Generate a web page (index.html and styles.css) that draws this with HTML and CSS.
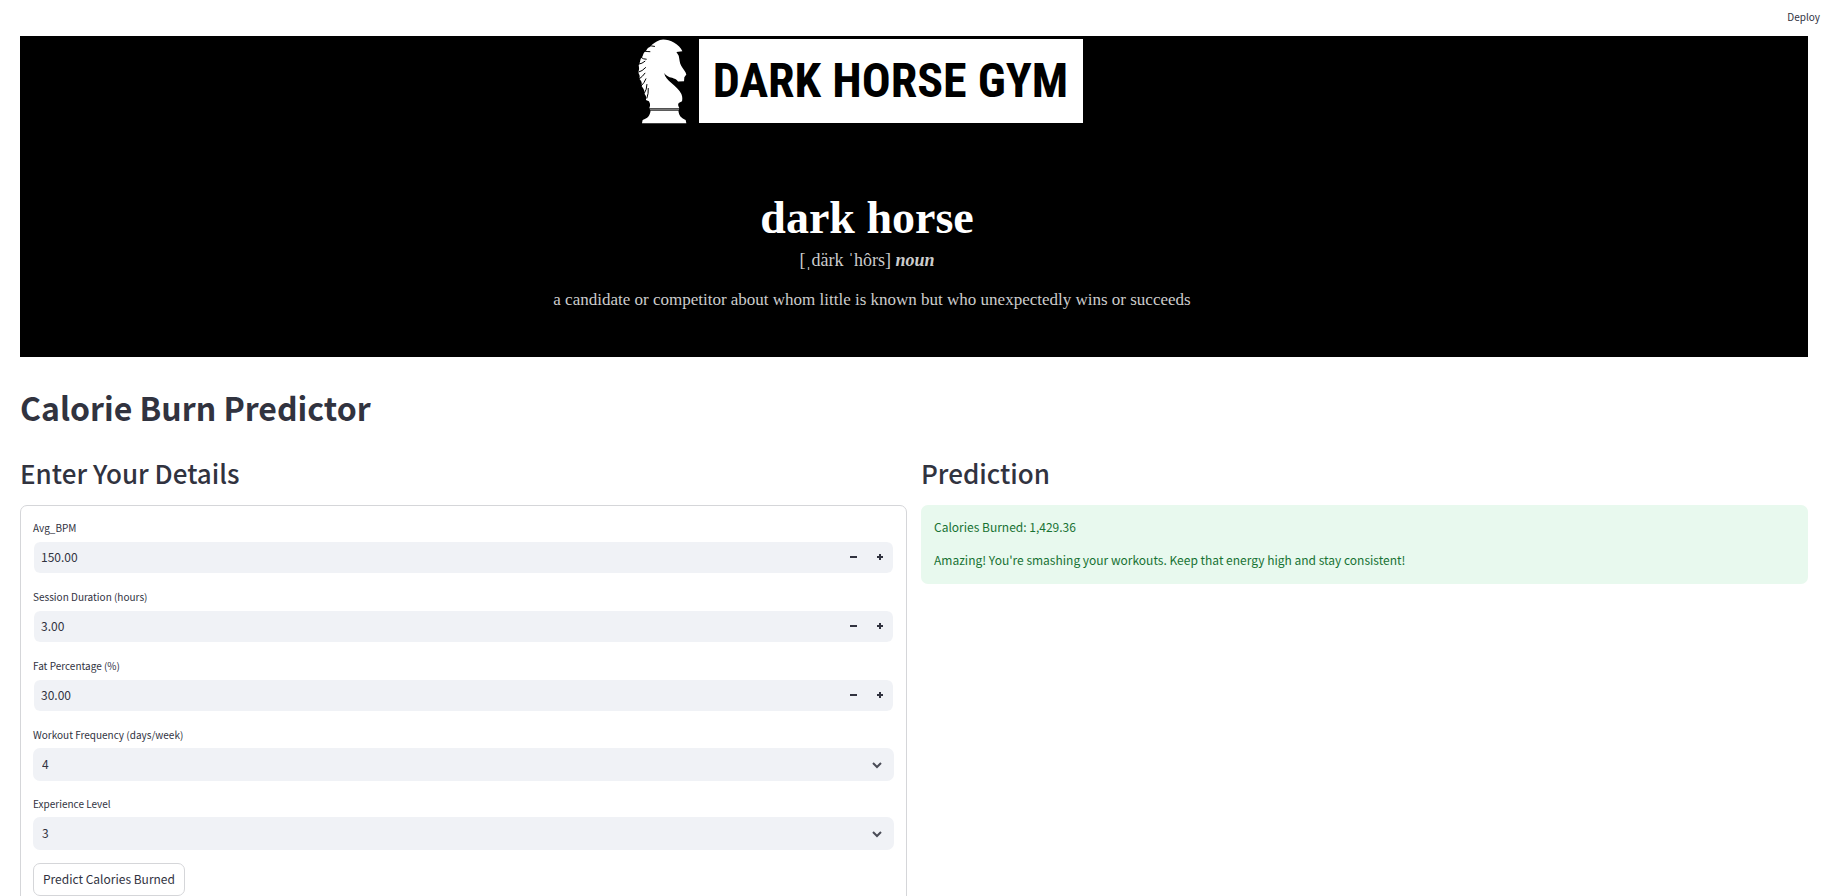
FILE: index.html
```html
<!DOCTYPE html>
<html lang="en">
<head>
<meta charset="utf-8">
<meta name="viewport" content="width=device-width, initial-scale=1">
<title>Calorie Burn Predictor</title>
<link rel="stylesheet" href="styles.css">
</head>
<body>
<div class="app">
  <header class="toolbar"><button class="deploy" type="button">Deploy</button></header>
  <main class="content">
    <section class="banner">
      <div class="logo">
        <svg class="horse" viewBox="24 12 148 256" aria-hidden="true">
          <path fill="#fff" d="M100 13C120 13 150 27 158 49L140 51L147 62C150 75 149 82 154 92C160 103 168 110 170 119L164 127L163 139L145 140C140 133 134 132 127 129C116 126 108 122 103 114C106 127 113 134 124 144C137 155 149 165 155 178C159 188 158 194 157 200L147 205C143 210 147 216 149 221H58C61 214 62 208 57 200L48 196C51 184 46 181 43 176C45 166 39 160 34 153C38 144 33 138 28 132C31 124 28 118 24 112C29 104 27 98 26 90C31 83 30 76 33 70C39 64 39 58 42 53C48 49 50 44 54 39C61 36 62 32 67 28C77 21 86 14 100 13Z"/>
          <path fill="none" stroke="#000" stroke-width="3" stroke-linecap="round" d="M56 31Q66 33 74 34M42 48Q52 50 60 50M31 66Q42 74 49 73M25 88Q37 86 45 79M25 112Q37 109 47 98M28 132Q38 125 45 115M34 153Q44 143 48 132M43 176Q51 164 51 149M51 190Q56 177 55 161"/>
          <path fill="#777" d="M60 222H148V227H60Z"/>
          <path fill="#fff" d="M62 228H146C148 244 155 250 168 256L170 266H36L38 256C53 251 60 243 62 228Z"/>
        </svg>
        <div class="wordmark">DARK HORSE GYM</div>
      </div>
      <div class="entry">
        <div class="term">dark horse</div>
        <div class="phonetic">[ˌdärk ˈhôrs] <b><i>noun</i></b></div>
        <div class="definition">a candidate or competitor about whom little is known but who unexpectedly wins or succeeds</div>
      </div>
    </section>

    <h1>Calorie Burn Predictor</h1>

    <div class="columns">
      <section>
        <h2>Enter Your Details</h2>
        <form class="form">
          <div class="field">
            <label for="bpm">Avg_BPM</label>
            <div class="number">
              <input id="bpm" type="text" inputmode="decimal" value="150.00">
              <button type="button" aria-label="Decrease Avg_BPM"><svg viewBox="0 0 8 8"><path d="M0 3h7v2H0z"/></svg></button>
              <button type="button" aria-label="Increase Avg_BPM"><svg viewBox="0 0 8 8"><path d="M3 1h2v2h2v2H5v2H3V5H1V3h2z"/></svg></button>
            </div>
          </div>
          <div class="field">
            <label for="duration">Session Duration (hours)</label>
            <div class="number">
              <input id="duration" type="text" inputmode="decimal" value="3.00">
              <button type="button" aria-label="Decrease duration"><svg viewBox="0 0 8 8"><path d="M0 3h7v2H0z"/></svg></button>
              <button type="button" aria-label="Increase duration"><svg viewBox="0 0 8 8"><path d="M3 1h2v2h2v2H5v2H3V5H1V3h2z"/></svg></button>
            </div>
          </div>
          <div class="field">
            <label for="fat">Fat Percentage (%)</label>
            <div class="number">
              <input id="fat" type="text" inputmode="decimal" value="30.00">
              <button type="button" aria-label="Decrease fat percentage"><svg viewBox="0 0 8 8"><path d="M0 3h7v2H0z"/></svg></button>
              <button type="button" aria-label="Increase fat percentage"><svg viewBox="0 0 8 8"><path d="M3 1h2v2h2v2H5v2H3V5H1V3h2z"/></svg></button>
            </div>
          </div>
          <div class="field">
            <label for="frequency">Workout Frequency (days/week)</label>
            <div class="select">
              <select id="frequency"><option>2</option><option>3</option><option selected>4</option><option>5</option></select>
              <svg viewBox="0 0 10 8" aria-hidden="true"><path d="M1 2l4 4 4-4"/></svg>
            </div>
          </div>
          <div class="field">
            <label for="level">Experience Level</label>
            <div class="select">
              <select id="level"><option>1</option><option>2</option><option selected>3</option></select>
              <svg viewBox="0 0 10 8" aria-hidden="true"><path d="M1 2l4 4 4-4"/></svg>
            </div>
          </div>
          <button class="submit" type="button">Predict Calories Burned</button>
        </form>
      </section>
      <section>
        <h2>Prediction</h2>
        <div class="result" role="status">
          <p>Calories Burned: 1,429.36</p>
          <p>Amazing! You're smashing your workouts. Keep that energy high and stay consistent!</p>
        </div>
      </section>
    </div>
  </main>
</div>
</body>
</html>
```
FILE: styles.css
```css
* { box-sizing: border-box; }

body {
  margin: 0;
  background: #fff;
  color: #31333f;
  font-family: "Noto Sans CJK SC", "Noto Sans", sans-serif;
  font-size: 12px;
  line-height: 20px;
}

button, input, select { font: inherit; color: inherit; }

.app {
  height: 100vh;
  overflow-y: auto;
  scrollbar-width: none;
}

.toolbar {
  display: flex;
  justify-content: flex-end;
  height: 36px;
  padding: 7px 11px 0 0;
}

.deploy {
  height: 20px;
  padding: 0;
  border: 0;
  background: none;
  font-size: 10px;
}

.content { padding: 0 23px 16px 20px; }

.banner {
  display: flex;
  flex-direction: column;
  align-items: center;
  height: 321px;
  padding: 3px 94px 0 0;
  background: #000;
  color: #ccc;
  font-family: "Liberation Serif", serif;
}

.logo {
  display: flex;
  gap: 12px;
  margin-right: 14px;
}

.horse { width: 49px; height: 85px; }

.wordmark {
  display: flex;
  align-items: center;
  justify-content: center;
  width: 384px;
  height: 84px;
  background: #fff;
  color: #000;
  font-family: "Liberation Sans Narrow", "Roboto Condensed", "DejaVu Sans Condensed", sans-serif;
  font-size: 48px;
  font-weight: 700;
  white-space: nowrap;
}

.entry {
  padding-top: 66px;
  font-size: 17px;
  text-align: center;
}

.term {
  color: #fff;
  font-size: 46px;
  font-weight: 700;
  line-height: 56px;
}

.phonetic { font-size: 18px; line-height: 28px; }

.definition { padding: 12px 0 0 10px; line-height: 28px; }

h1 {
  margin: 0;
  padding: 28px 0 17px;
  font-size: 32px;
  font-weight: 700;
  line-height: 44px;
}

.columns {
  display: grid;
  grid-template-columns: 1fr 1fr;
  gap: 14px;
}

h2 {
  margin: 0;
  padding: 8px 0 13px;
  font-size: 26px;
  font-weight: 500;
  line-height: 38px;
}

.form {
  display: flex;
  flex-direction: column;
  gap: 13px;
  padding: 12px;
  border: 1px solid #d5d6d9;
  border-radius: 7px;
}

.field label {
  display: block;
  margin-bottom: 3px;
  font-size: 10px;
}

.number {
  display: flex;
  height: 33px;
  border: 1px solid #fff;
  border-radius: 7px;
  background: #f0f2f6;
  background-clip: padding-box;
}

.number input {
  flex: 1;
  min-width: 0;
  padding: 0 7px 2px;
  border: 0;
  background: none;
}

.number button {
  display: grid;
  place-items: center;
  width: 26px;
  padding: 0 0 2px;
  border: 0;
  background: none;
}

.number svg { width: 8px; height: 8px; fill: #31333f; }

.select {
  display: grid;
  grid-template-columns: 1fr 34px;
  align-items: center;
  height: 33px;
  border-radius: 7px;
  background: #f0f2f6;
}

.select select {
  grid-area: 1 / 1 / 2 / 3;
  width: 100%;
  height: 33px;
  padding: 0 9px 2px;
  border: 0;
  background: none;
  appearance: none;
}

.select svg {
  grid-area: 1 / 2;
  justify-self: center;
  width: 10px;
  height: 8px;
  fill: none;
  stroke: #4a4c57;
  stroke-width: 2;
  pointer-events: none;
}

.submit {
  align-self: flex-start;
  height: 33px;
  padding: 0 9px 2px;
  border: 1px solid #d5d6d9;
  border-radius: 7px;
  background: #fff;
}

.result {
  padding: 12px 13px 14px;
  border-radius: 7px;
  background: #e8f9ee;
  color: #177233;
}

.result p { margin: 0; }
.result p + p { margin-top: 13px; }
```
